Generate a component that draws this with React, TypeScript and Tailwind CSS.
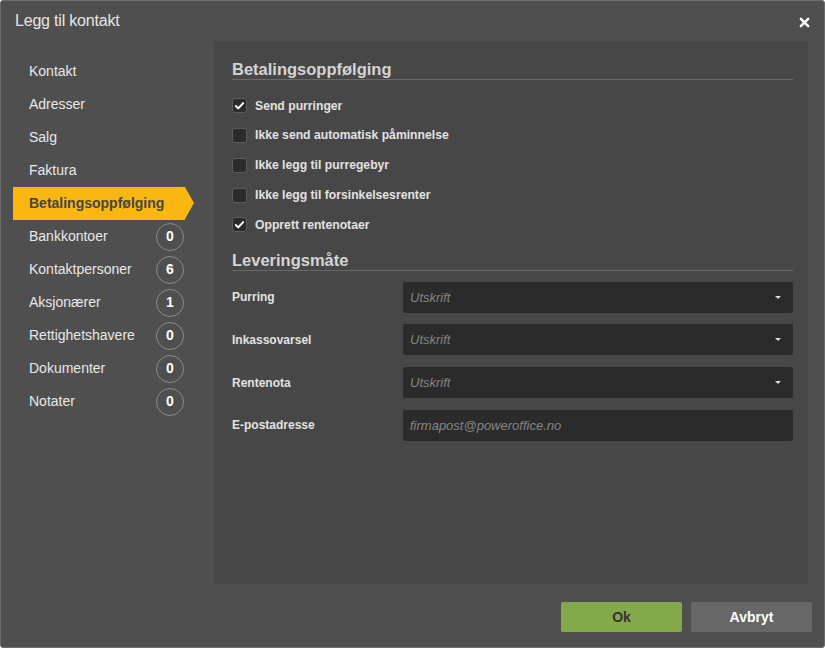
import React from 'react';

const navItems: { label: string; count?: number; active?: boolean }[] = [
  { label: 'Kontakt' },
  { label: 'Adresser' },
  { label: 'Salg' },
  { label: 'Faktura' },
  { label: 'Betalingsoppfølging', active: true },
  { label: 'Bankkontoer', count: 0 },
  { label: 'Kontaktpersoner', count: 6 },
  { label: 'Aksjonærer', count: 1 },
  { label: 'Rettighetshavere', count: 0 },
  { label: 'Dokumenter', count: 0 },
  { label: 'Notater', count: 0 },
];

const options = [
  { label: 'Send purringer', checked: true },
  { label: 'Ikke send automatisk påminnelse', checked: false },
  { label: 'Ikke legg til purregebyr', checked: false },
  { label: 'Ikke legg til forsinkelsesrenter', checked: false },
  { label: 'Opprett rentenotaer', checked: true },
];

const fields = [
  { label: 'Purring', value: 'Utskrift', select: true },
  { label: 'Inkassovarsel', value: 'Utskrift', select: true },
  { label: 'Rentenota', value: 'Utskrift', select: true },
  { label: 'E-postadresse', value: 'firmapost@poweroffice.no', select: false },
];

const Check = () => (
  <svg width="11" height="11" viewBox="0 0 12 12" fill="none">
    <path d="M2 6.5l2.6 2.6L10 3.4" stroke="#fff" strokeWidth={2.2} strokeLinecap="round" strokeLinejoin="round" />
  </svg>
);

const SectionTitle = ({ children }: { children: React.ReactNode }) => (
  <div className="h-[21px] border-b border-[#6a6a6a] text-[16.5px] font-bold leading-[20px] text-[#d4d4d4]">{children}</div>
);

export default function App() {
  return (
    <div className="w-[825px] h-[648px] flex flex-col bg-[#4f4f4f] border border-[#6b6b6b] rounded-[3px] text-[14px] text-[#e4e4e4] font-['Liberation_Sans',Arial,sans-serif] overflow-hidden">
      <div className="h-[40px] flex items-center justify-between pl-[14px] pr-[14px] shrink-0">
        <span className="text-[16px] text-[#e6e6e6] tracking-[-0.2px]">Legg til kontakt</span>
        <svg width="11" height="11" viewBox="0 0 12 12" className="mt-[2px]">
          <path d="M2 2l8 8M10 2l-8 8" stroke="#fff" strokeWidth={2.6} strokeLinecap="round" />
        </svg>
      </div>

      <div className="flex flex-1">
        <nav className="w-[213px] pt-[14px] shrink-0">
          {navItems.map((item) => (
            <div key={item.label} className="relative ml-[12px] w-[172px] h-[33px]">
              {item.active ? (
                <>
                  <div className="h-full bg-[#fbb711] flex items-center pl-[16px] font-bold text-[#464646] text-[14px]">
                    {item.label}
                  </div>
                  <div className="absolute right-[-9px] top-0 w-0 h-0 border-y-[16.5px] border-y-transparent border-l-[9px] border-l-[#fbb711]" />
                </>
              ) : (
                <div className="h-full flex items-center justify-between pl-[16px] pr-[1px]">
                  <span className="text-[#e8e8e8]">{item.label}</span>
                  {item.count !== undefined && (
                    <span className="w-[28px] h-[28px] rounded-full border border-[#8a8a8a] flex items-center justify-center font-bold text-[14px] text-white">
                      {item.count}
                    </span>
                  )}
                </div>
              )}
            </div>
          ))}
        </nav>

        <div className="flex flex-col flex-1">
          <main className="w-[594px] h-[543px] bg-[#474747] pl-[18px] pr-[15px] pt-[18px]">
            <SectionTitle>Betalingsoppfølging</SectionTitle>
            <div className="pt-[11px]">
              {options.map((o) => (
                <label key={o.label} className="h-[29.75px] flex items-center gap-[8px]">
                  <span className="w-[15px] h-[15px] rounded-[3px] bg-[#2c2c2c] border border-[#5c5c5c] flex items-center justify-center">
                    {o.checked && <Check />}
                  </span>
                  <span className="text-[12.2px] font-bold text-[#e2e2e2]">{o.label}</span>
                </label>
              ))}
            </div>
            <div className="pt-[10px]">
              <SectionTitle>Leveringsmåte</SectionTitle>
            </div>
            <div className="pt-[11px] flex flex-col gap-[11.7px]">
              {fields.map((f) => (
                <div key={f.label} className="flex items-center h-[31px]">
                  <span className="w-[171px] text-[12px] font-bold text-[#e2e2e2]">{f.label}</span>
                  <div className="flex-1 h-full bg-[#2b2b2b] rounded-[2px] flex items-center justify-between pl-[7px] pr-[12px]">
                    <span className="italic text-[13px] text-[#858585]">{f.value}</span>
                    {f.select && (
                      <span className="w-0 h-0 border-x-[3.5px] border-x-transparent border-t-[3.5px] border-t-[#e0e0e0]" />
                    )}
                  </div>
                </div>
              ))}
            </div>
          </main>

          <footer className="flex justify-end gap-[9px] pt-[18px] pr-[12px]">
            <button className="w-[121px] h-[30px] rounded-[2px] bg-[#84a94a] text-[14px] font-bold text-[#333]">Ok</button>
            <button className="w-[121px] h-[30px] rounded-[2px] bg-[#676767] text-[14px] font-bold text-white">Avbryt</button>
          </footer>
        </div>
      </div>
    </div>
  );
}
